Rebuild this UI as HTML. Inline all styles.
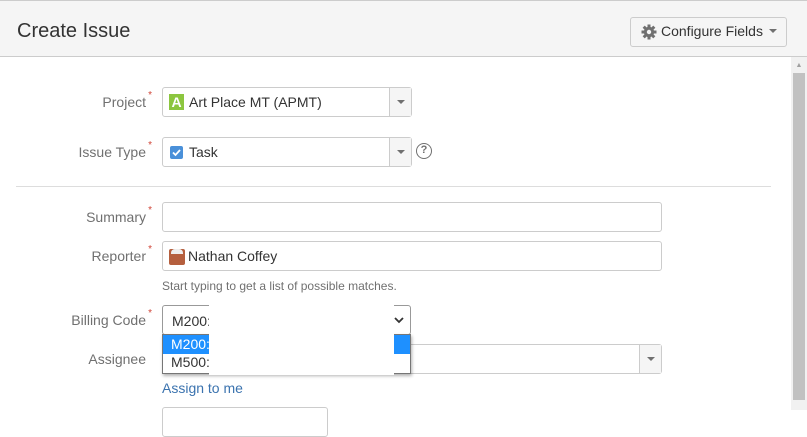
<!DOCTYPE html>
<html><head><meta charset="utf-8"><style>
*{box-sizing:border-box;margin:0;padding:0}
body{width:807px;height:410px;overflow:hidden;background:#fff;font-family:"Liberation Sans",Arial,sans-serif;color:#333;position:relative}
.hdr{position:absolute;left:0;top:0;width:807px;height:57px;background:#f5f5f5;border-top:1px solid #ccc;border-bottom:1px solid #ccc}
.hdr h2{position:absolute;left:17px;top:19px;font-size:20px;font-weight:normal;color:#333}
.cfg{position:absolute;left:630px;top:16px;width:157px;height:30px;border:1px solid #ccc;border-radius:3px;background:#f5f5f5;font-size:14px;color:#333;padding:6px 0 0 10px}
.lbl{position:absolute;right:661px;font-size:14px;color:#707070;text-align:right;white-space:nowrap}
.lbl sup{color:#d04437;font-size:10px;position:absolute;right:-6px;top:-4px}
.box{position:absolute;border:1px solid #ccc;border-radius:3px;background:#fff;font-size:14px;color:#333}
.caret{position:absolute;right:0;top:0;bottom:0;width:22px;border-left:1px solid #ccc;background:#f5f5f5}
.caret:after{content:"";position:absolute;left:7px;top:12px;border:4px solid transparent;border-top:4px solid #707070}
.sb{position:absolute;left:791px;top:57px;width:16px;height:353px;background:#f1f1f1}
.thumb{position:absolute;left:793px;top:73px;width:12px;height:327px;background:#c1c1c1}
</style></head><body>
<div class="hdr"><h2>Create Issue</h2>
<div class="cfg"><svg width="16" height="16" viewBox="0 0 16 16" style="position:absolute;left:10px;top:6px"><g fill="#707070"><circle cx="8" cy="8" r="5.2"/><rect x="6.5" y="0.5" width="3" height="15"/><rect x="0.5" y="6.5" width="15" height="3"/><rect x="6.5" y="0.5" width="3" height="15" transform="rotate(45 8 8)"/><rect x="6.5" y="0.5" width="3" height="15" transform="rotate(-45 8 8)"/></g><circle cx="8" cy="8" r="2.2" fill="#f5f5f5"/></svg><span style="position:absolute;left:30px;top:5px">Configure Fields</span><span style="position:absolute;left:138px;top:11px;border:4px solid transparent;border-top:4px solid #707070"></span></div>
</div>
<div class="sb"></div><div class="thumb"></div>
<div style="position:absolute;left:791px;top:62px;width:16px;height:8px;color:#a0a0a0;font-size:7px;text-align:center">▲</div>

<div class="lbl" style="top:94px">Project<sup>*</sup></div>
<div class="box" style="left:162px;top:87px;width:250px;height:30px"><span style="position:absolute;left:6px;top:6px;width:15px;height:16px;background:#8cc63f;color:#fff;font-weight:bold;font-size:14px;text-align:center;line-height:16px">A</span><span style="position:absolute;left:26px;top:6px">Art Place MT (APMT)</span><div class="caret"></div></div>

<div class="lbl" style="top:144px">Issue Type<sup>*</sup></div>
<div class="box" style="left:162px;top:137px;width:250px;height:30px"><span style="position:absolute;left:7px;top:8px;width:13px;height:13px;background:#4a90d9;border-radius:2px"><svg width="13" height="13" viewBox="0 0 13 13"><path d="M3 6.5l2.5 2.5 4.5-5" stroke="#fff" stroke-width="1.8" fill="none"/></svg></span><span style="position:absolute;left:26px;top:6px">Task</span><div class="caret"></div></div>
<div style="position:absolute;left:416px;top:143px;width:16px;height:16px;border:1.5px solid #707070;border-radius:50%;font-size:11px;font-weight:bold;color:#707070;text-align:center;line-height:13px">?</div>

<div style="position:absolute;left:16px;top:186px;width:755px;height:1px;background:#ddd"></div>

<div class="lbl" style="top:209px">Summary<sup>*</sup></div>
<div class="box" style="left:162px;top:202px;width:500px;height:30px"></div>

<div class="lbl" style="top:248px">Reporter<sup>*</sup></div>
<div class="box" style="left:162px;top:241px;width:500px;height:30px"><span style="position:absolute;left:6px;top:7px;width:16px;height:16px;background:#b55f3e;border-radius:2px"><span style="position:absolute;left:2px;top:0;width:12px;height:5px;background:#eee;border-radius:4px 4px 0 0"></span></span><span style="position:absolute;left:25px;top:6px">Nathan Coffey</span></div>
<div style="position:absolute;left:162px;top:279px;font-size:12px;color:#707070">Start typing to get a list of possible matches.</div>

<div class="lbl" style="top:312px">Billing Code<sup>*</sup></div>
<div class="lbl" style="top:351px">Assignee</div>
<div class="box" style="left:162px;top:344px;width:500px;height:30px"><div class="caret"></div></div>
<div style="position:absolute;left:162px;top:380px;font-size:14px;color:#3b73af">Assign to me</div>
<div class="box" style="left:162px;top:407px;width:166px;height:30px"></div>

<div style="position:absolute;left:162px;top:305px;width:249px;height:30px;border:1px solid #999;border-radius:3px;background:#fff;font-size:14px"><span style="position:absolute;left:9px;top:7px">M200:</span><svg width="10" height="7" viewBox="0 0 10 7" style="position:absolute;left:231px;top:11px"><path d="M1 1l4 4 4-4" stroke="#333" stroke-width="1.8" fill="none"/></svg></div>
<div style="position:absolute;left:162px;top:334px;width:249px;height:40px;border:1px solid #767676;background:#fff;box-shadow:1px 2px 3px rgba(0,0,0,.3);font-size:14px">
<div style="height:19px;background:#1e90ff;color:#fff;padding:1px 0 0 8px">M200:</div>
<div style="height:19px;padding:0 0 0 8px;color:#333">M500:</div></div>
<div style="position:absolute;left:209px;top:305px;width:185px;height:70px;background:#fff"></div>
</body></html>
